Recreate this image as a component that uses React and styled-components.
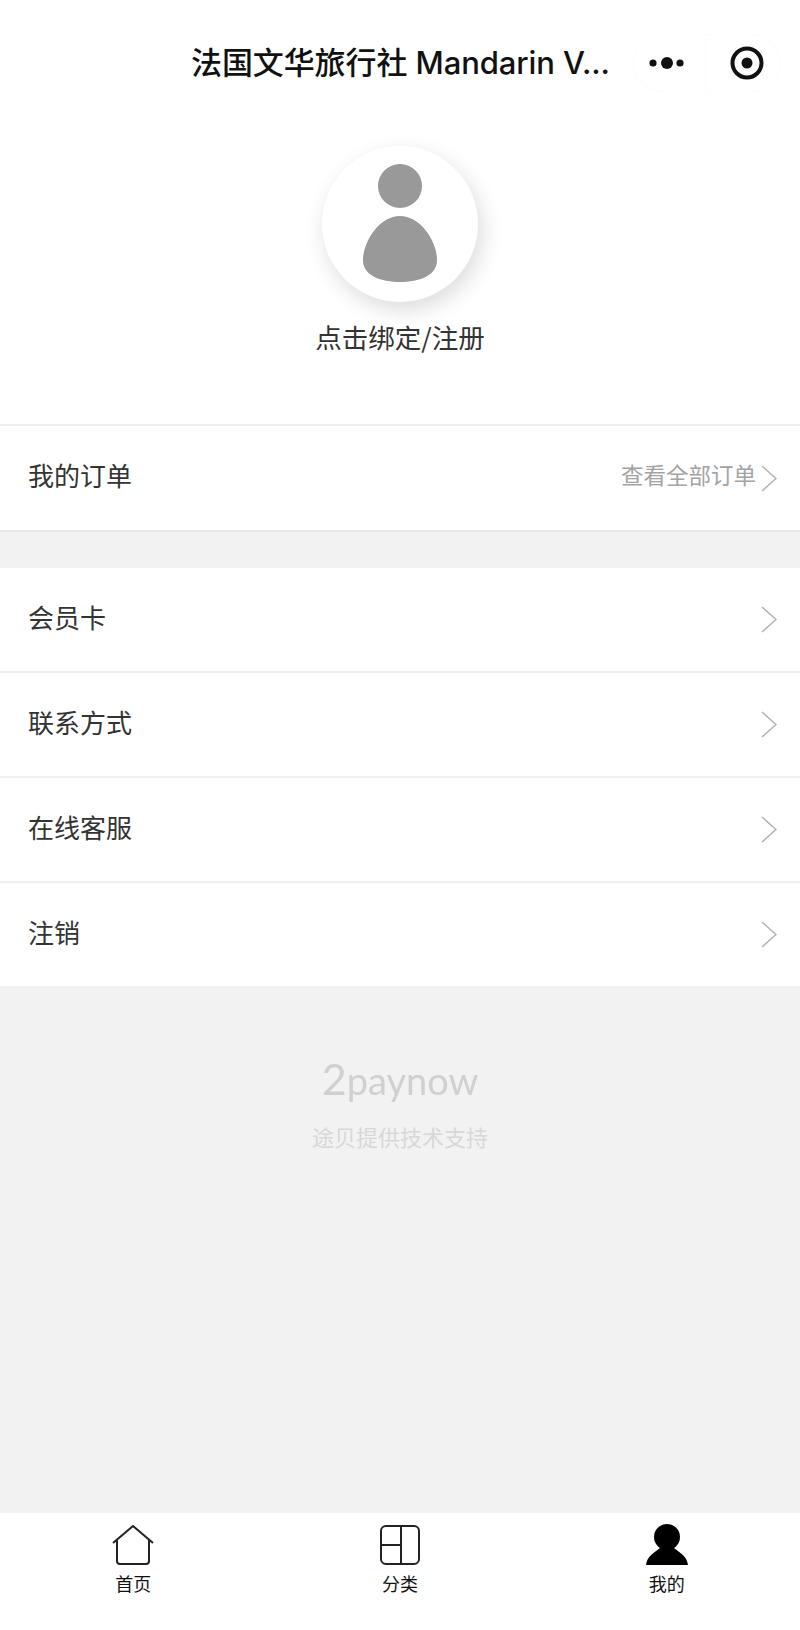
import React from 'react'
import styled, { createGlobalStyle } from 'styled-components'

const GlobalStyle = createGlobalStyle`
  html, body {
    margin: 0;
    padding: 0;
    background: #fff;
  }
  body {
    font-family: 'Noto Sans CJK SC', 'Liberation Sans', sans-serif;
    color: #222;
  }
`

const Page = styled.div`
  display: flex;
  flex-flow: column;
  width: 800px;
  height: 1630px;
  overflow: hidden;
  background: #f2f2f2;
`

const Header = styled.div`
  background: #fff;
`

const NavBar = styled.div`
  display: flex;
  flex-flow: row nowrap;
  align-items: center;
  height: 58px;
  padding-top: 34px;
  padding-left: 191px;
`

const Title = styled.div`
  width: 442px;
  font-family: Inter, 'Noto Sans CJK SC', sans-serif;
  font-size: 31px;
  font-weight: 500;
  letter-spacing: -0.1px;
  line-height: 58px;
  color: #111;
  white-space: nowrap;
`

const Capsule = styled.div`
  display: flex;
  flex-flow: row nowrap;
  width: 148px;
  height: 58px;
  border-radius: 29px;
  border: 1px solid #fcfcfc;
  box-sizing: border-box;
`

const CapsuleCell = styled.div`
  flex: 1;
  display: flex;
  align-items: center;
  justify-content: center;
  padding: ${(p) => p.$padding || 0};
  & + & {
    border-left: 1px solid #fbfbfb;
  }
`

const Profile = styled.div`
  display: flex;
  flex-flow: column;
  align-items: center;
  height: 332px;
  padding-top: 54px;
  box-sizing: border-box;
`

const Avatar = styled.div`
  display: flex;
  align-items: center;
  justify-content: center;
  width: 156px;
  height: 156px;
  padding-bottom: 2px;
  box-sizing: border-box;
  border-radius: 50%;
  background: #fff;
  box-shadow: 4px 8px 22px rgba(0, 0, 0, 0.14);
`

const BindText = styled.div`
  margin-top: 15px;
  font-size: 26.5px;
  line-height: 40px;
  color: #333;
`

const Group = styled.div`
  display: flex;
  flex-flow: column;
  background: #fff;
  margin-bottom: ${(p) => p.$gap || 0}px;
`

const Row = styled.div`
  display: flex;
  flex-flow: row nowrap;
  align-items: center;
  height: ${(p) => p.$height || 105}px;
  box-sizing: border-box;
  padding: 0 23px 0 28px;
  border-bottom: 2px solid ${(p) => (p.$top ? '#e8e8e8' : '#f0f0f0')};
  ${(p) => p.$top && 'border-top: 2px solid #eeeeee;'}
`

const RowLabel = styled.div`
  padding-bottom: ${(p) => (p.$top ? 8 : 6)}px;
  font-size: 26px;
  color: #333;
`

const Fill = styled.div`
  flex-grow: 1;
`

const RowHint = styled.div`
  padding-bottom: 8px;
  margin-right: 5px;
  font-size: 22.5px;
  color: #a3a3a3;
`

const Content = styled.div`
  flex: 1;
  display: flex;
  flex-flow: column;
  align-items: center;
`

const Logo = styled.div`
  margin-top: 66px;
  height: 50px;
  font-family: Lato, sans-serif;
  font-size: 38px;
  line-height: 50px;
  color: #d0d0d0;
  filter: blur(0.7px);
`

const LogoDigit = styled.span`
  font-size: 43px;
`

const Caption = styled.div`
  margin-top: 14px;
  font-size: 22px;
  line-height: 36px;
  color: #d8d8d8;
`

const TabBar = styled.div`
  display: grid;
  grid-template-columns: repeat(3, 1fr);
  height: 117px;
  background: #fff;
  box-sizing: border-box;
  padding-top: 11px;
`

const Tab = styled.div`
  display: flex;
  flex-flow: column;
  align-items: center;
`

const TabIcon = styled.div`
  display: flex;
  align-items: center;
  justify-content: center;
  height: 41px;
`

const TabLabel = styled.div`
  margin-top: 5px;
  font-size: 18px;
  line-height: 26px;
  color: #111;
`

function Chevron() {
  return (
    <svg width="16" height="27" viewBox="0 0 16 27" fill="none">
      <path d="M1 1 L15 13.5 L1 26" stroke="#b0b0b0" strokeWidth="1.5" />
    </svg>
  )
}

function MoreIcon() {
  return (
    <svg width="38" height="14" viewBox="0 0 38 14" fill="#111">
      <circle cx="5" cy="7" r="3.6" />
      <circle cx="19" cy="7" r="6" />
      <circle cx="32" cy="7" r="3.6" />
    </svg>
  )
}

function TargetIcon() {
  return (
    <svg width="34" height="34" viewBox="0 0 34 34" fill="none">
      <circle cx="17" cy="17" r="14.5" stroke="#111" strokeWidth="4" />
      <circle cx="17" cy="17" r="5.5" fill="#111" />
    </svg>
  )
}

function AvatarIcon() {
  return (
    <svg width="74" height="118" viewBox="0 0 74 118" fill="#999">
      <circle cx="37" cy="22" r="22" />
      <path d="M37 52 C58 52 74 78 74 96 C74 112 56 118 37 118 C18 118 0 112 0 96 C0 78 16 52 37 52 Z" />
    </svg>
  )
}

function HomeIcon() {
  return (
    <svg width="42" height="40" viewBox="0 0 42 40" fill="none" stroke="#222" strokeWidth="2">
      <path d="M1 18 L21 1 L41 18" />
      <path d="M5 15 V36 Q5 39 8 39 H34 Q37 39 37 36 V15" />
    </svg>
  )
}

function CategoryIcon() {
  return (
    <svg width="40" height="40" viewBox="0 0 40 40" fill="none" stroke="#222" strokeWidth="2">
      <rect x="1" y="1" width="38" height="38" rx="5" />
      <path d="M21 1 V39 M1 20 H21" />
    </svg>
  )
}

function MineIcon() {
  return (
    <svg width="42" height="41" viewBox="0 0 42 41" fill="#000">
      <ellipse cx="21" cy="13" rx="13" ry="13" />
      <path d="M0 41 C1 32 8 29 14 24 H28 C34 29 41 32 42 41 Z" />
    </svg>
  )
}

const menu = ['会员卡', '联系方式', '在线客服', '注销']

const tabs = [
  { label: '首页', icon: <HomeIcon /> },
  { label: '分类', icon: <CategoryIcon /> },
  { label: '我的', icon: <MineIcon /> },
]

export default function App() {
  return (
    <Page>
      <GlobalStyle />
      <Header>
        <NavBar>
          <Title>法国文华旅行社 Mandarin V...</Title>
          <Capsule>
            <CapsuleCell $padding="0 6px 0 0">
              <MoreIcon />
            </CapsuleCell>
            <CapsuleCell $padding="0 0 0 8px">
              <TargetIcon />
            </CapsuleCell>
          </Capsule>
        </NavBar>
        <Profile>
          <Avatar>
            <AvatarIcon />
          </Avatar>
          <BindText>点击绑定/注册</BindText>
        </Profile>
      </Header>
      <Group $gap={36}>
        <Row $top $height={108}>
          <RowLabel $top>我的订单</RowLabel>
          <Fill />
          <RowHint>查看全部订单</RowHint>
          <Chevron />
        </Row>
      </Group>
      <Group>
        {menu.map((item) => (
          <Row key={item}>
            <RowLabel>{item}</RowLabel>
            <Fill />
            <Chevron />
          </Row>
        ))}
      </Group>
      <Content>
        <Logo>
          <LogoDigit>2</LogoDigit>paynow
        </Logo>
        <Caption>途贝提供技术支持</Caption>
      </Content>
      <TabBar>
        {tabs.map((tab) => (
          <Tab key={tab.label}>
            <TabIcon>{tab.icon}</TabIcon>
            <TabLabel>{tab.label}</TabLabel>
          </Tab>
        ))}
      </TabBar>
    </Page>
  )
}
